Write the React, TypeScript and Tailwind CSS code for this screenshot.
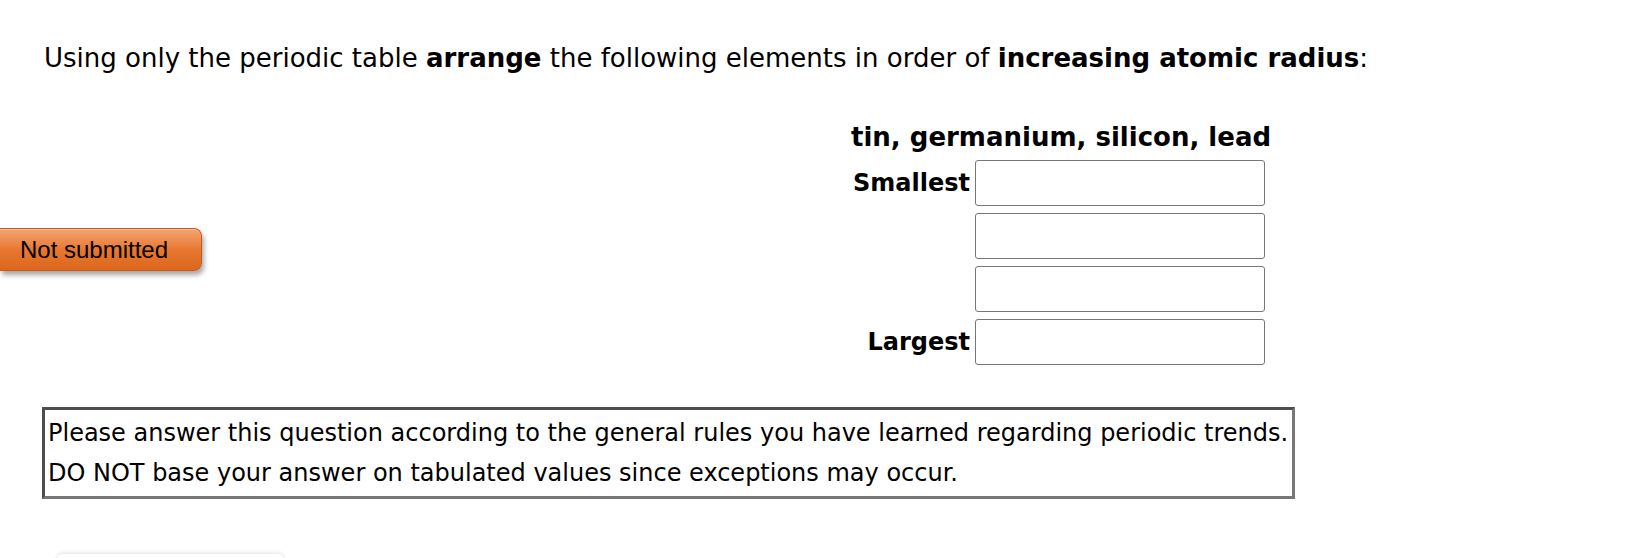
export default function App() {
  const rows = ["Smallest", "", "", "Largest"];
  return (
    <div className="relative w-[1638px] h-[558px] overflow-hidden bg-white text-black font-['DejaVu_Sans',sans-serif]">
      {/* Question text */}
      <p className="pl-[44px] pt-[43px] text-[26px] leading-[30px] whitespace-nowrap">
        Using only the periodic table <b>arrange</b> the following elements in order of{" "}
        <b>increasing atomic radius</b>:
      </p>

      <div className="flex mt-[49px]">
        {/* Status button */}
        <div className="w-[851px] flex items-start pt-[106px]">
          <div className="w-[202px] h-[43px] flex items-center pl-[20px] rounded-r-[8px] border border-l-0 border-[#c65a1c] bg-gradient-to-b from-[#f4a470] via-[#e8782f] to-[#dc661c] shadow-[inset_0_1px_0_rgba(255,255,255,0.35),2px_4px_5px_rgba(0,0,0,0.35)] font-['Liberation_Sans',sans-serif] text-[24px]">
            Not submitted
          </div>
        </div>

        {/* Answer table */}
        <div className="w-[420px]">
          <div className="text-[26px] font-bold leading-[30px] whitespace-nowrap">
            tin, germanium, silicon, lead
          </div>
          <div className="flex flex-col gap-[7px] mt-[8px]">
            {rows.map((label, i) => (
              <div key={i} className="flex items-center justify-end gap-[5px] pr-[6px]">
                <span className="text-[24px] font-bold">{label}</span>
                <input
                  type="text"
                  className="w-[290px] h-[46px] border border-[#767676] rounded-[3px] outline-none"
                />
              </div>
            ))}
          </div>
        </div>
      </div>

      {/* Note box */}
      <div className="ml-[42px] mt-[42px] w-[1253px] h-[92px] border-[3px] border-[#4d4d4d] border-r-[#777] border-b-[#777] pl-[3px] pt-[3px] text-[24px] leading-[40px] whitespace-nowrap">
        <div>Please answer this question according to the general rules you have learned regarding periodic trends.</div>
        <div>DO NOT base your answer on tabulated values since exceptions may occur.</div>
      </div>

      {/* Next button, cut off at the bottom */}
      <div className="absolute left-[57px] top-[554px] w-[227px] h-[40px] rounded-[6px] bg-white shadow-[0_-1px_4px_rgba(0,0,0,0.12)]" />
    </div>
  );
}
